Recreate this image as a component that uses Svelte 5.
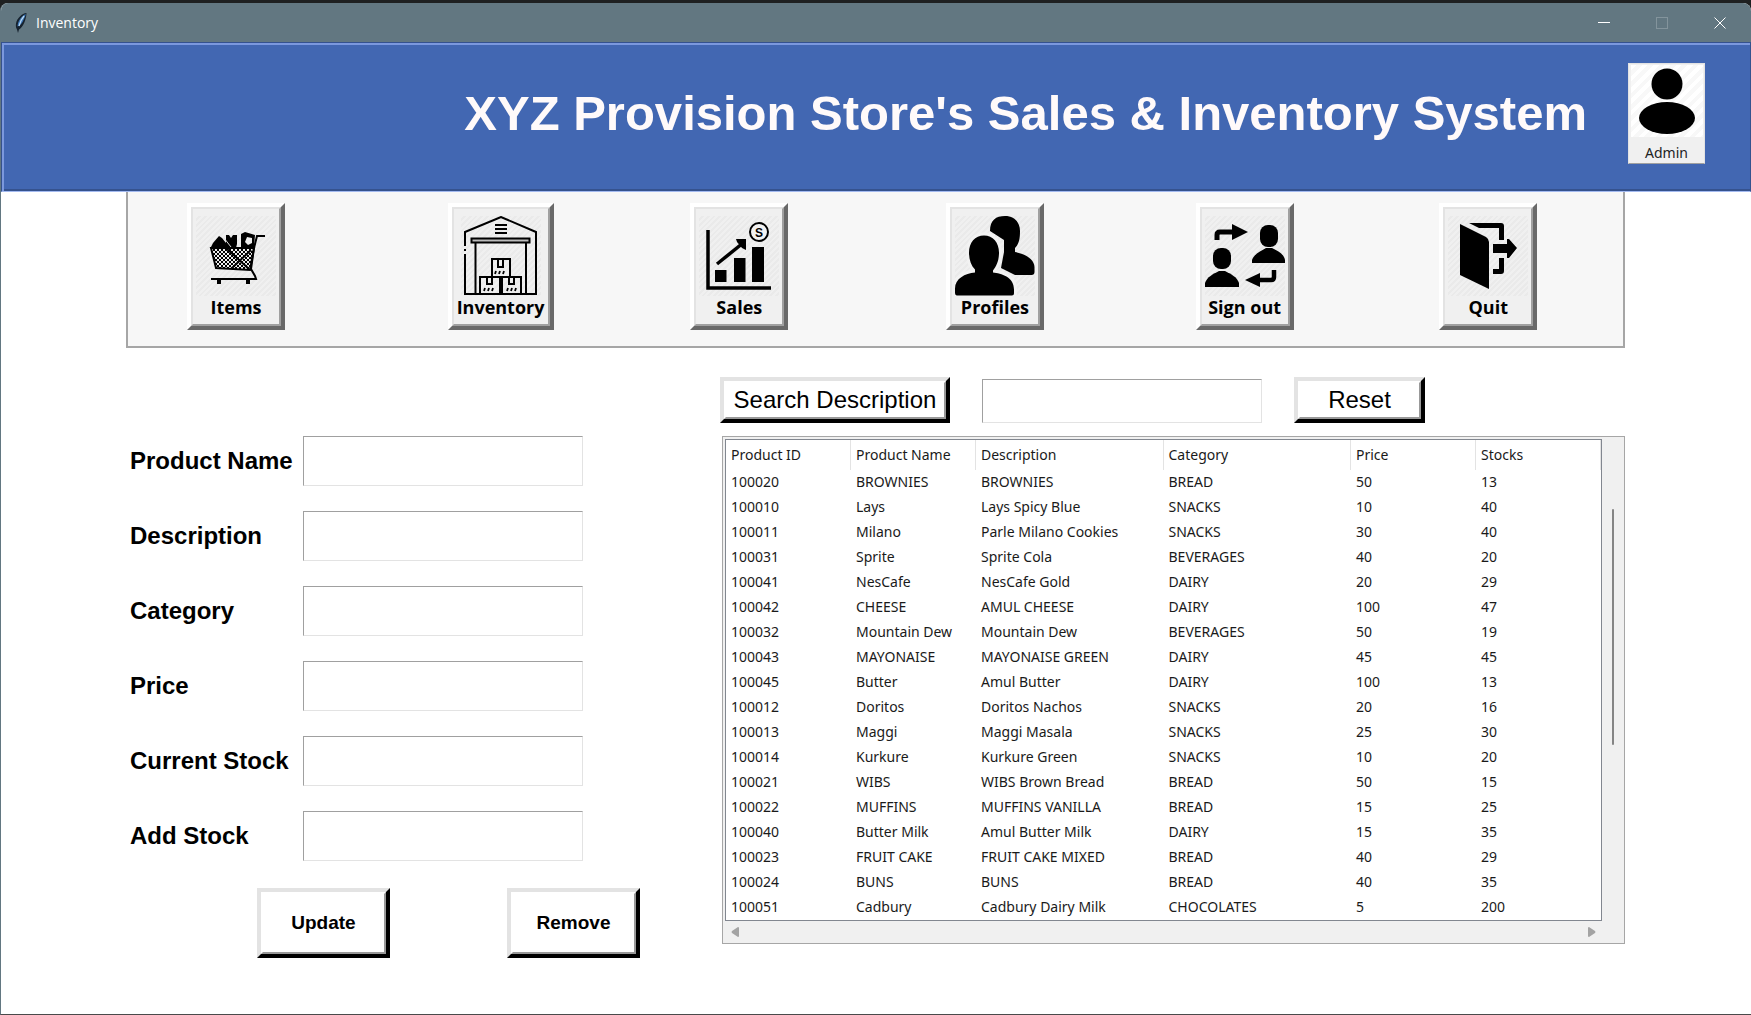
<script>
  const nav = [
    { id: 'items', label: 'Items' },
    { id: 'inventory', label: 'Inventory' },
    { id: 'sales', label: 'Sales' },
    { id: 'profiles', label: 'Profiles' },
    { id: 'signout', label: 'Sign out' },
    { id: 'quit', label: 'Quit' }
  ];
  const fields = ['Product Name', 'Description', 'Category', 'Price', 'Current Stock', 'Add Stock'];
  const headings = ['Product ID', 'Product Name', 'Description', 'Category', 'Price', 'Stocks'];
  const rows = [
    ['100020', 'BROWNIES', 'BROWNIES', 'BREAD', '50', '13'],
    ['100010', 'Lays', 'Lays Spicy Blue', 'SNACKS', '10', '40'],
    ['100011', 'Milano', 'Parle Milano Cookies', 'SNACKS', '30', '40'],
    ['100031', 'Sprite', 'Sprite Cola', 'BEVERAGES', '40', '20'],
    ['100041', 'NesCafe', 'NesCafe Gold', 'DAIRY', '20', '29'],
    ['100042', 'CHEESE', 'AMUL CHEESE', 'DAIRY', '100', '47'],
    ['100032', 'Mountain Dew', 'Mountain Dew', 'BEVERAGES', '50', '19'],
    ['100043', 'MAYONAISE', 'MAYONAISE GREEN', 'DAIRY', '45', '45'],
    ['100045', 'Butter', 'Amul Butter', 'DAIRY', '100', '13'],
    ['100012', 'Doritos', 'Doritos Nachos', 'SNACKS', '20', '16'],
    ['100013', 'Maggi', 'Maggi Masala', 'SNACKS', '25', '30'],
    ['100014', 'Kurkure', 'Kurkure Green', 'SNACKS', '10', '20'],
    ['100021', 'WIBS', 'WIBS Brown Bread', 'BREAD', '50', '15'],
    ['100022', 'MUFFINS', 'MUFFINS VANILLA', 'BREAD', '15', '25'],
    ['100040', 'Butter Milk', 'Amul Butter Milk', 'DAIRY', '15', '35'],
    ['100023', 'FRUIT CAKE', 'FRUIT CAKE MIXED', 'BREAD', '40', '29'],
    ['100024', 'BUNS', 'BUNS', 'BREAD', '40', '35'],
    ['100051', 'Cadbury', 'Cadbury Dairy Milk', 'CHOCOLATES', '5', '200']
  ];
</script>

<div class="desktop">
  <div class="window">
    <div class="titlebar">
      <svg class="feather" viewBox="0 0 14 22" aria-hidden="true">
        <path d="M12.500 1C8 1.500 3 6 2 11.500c-.4 2.500 0 4.500 1 6L4 21l1-3.500C9 15 12 9 12.500 1z" fill="#16222e" />
        <path d="M11.700 2C8 4 4 8 3.500 14.500c3-1 5-4 6-6.500 1-2 2-4 2.200-6z" fill="#3f78b8" />
        <path d="M10 4C7.500 7 6 10 5 14" stroke="#b9d8f2" stroke-width="1.200" fill="none" />
      </svg>
      <span class="window-name">Inventory</span>
      <div class="controls">
        <button aria-label="Minimize"><svg viewBox="0 0 12 12"><path d="M0 5.500h12" /></svg></button>
        <button aria-label="Maximize" disabled><svg viewBox="0 0 12 12"><rect x=".5" y=".5" width="11" height="11" /></svg></button>
        <button aria-label="Close"><svg viewBox="0 0 12 12"><path d="M.5.5l11 11M11.500.5l-11 11" /></svg></button>
      </div>
    </div>

    <header>
      <h1>XYZ Provision Store's Sales &amp; Inventory System</h1>
      <button class="admin">
        <svg viewBox="0 0 72 72" aria-hidden="true">
          <circle cx="36" cy="19" r="15.500" />
          <ellipse cx="36" cy="53" rx="28" ry="16" />
        </svg>
        <span>Admin</span>
      </button>
    </header>

    <div class="content">
      <nav>
        {#each nav as item}
          <div class="slot">
            <button class="tile">
              <span class="face">
                <svg viewBox="0 0 80 80" aria-hidden="true">
                  {#if item.id === 'items'}
                    <defs>
                      <pattern id="mesh" width="4" height="4" patternUnits="userSpaceOnUse">
                        <path d="M0 0l4 4M4 0L0 4" stroke="#000" stroke-width="1" />
                      </pattern>
                    </defs>
                    <path d="M15 32h43l-4 22-34-2z" fill="url(#mesh)" stroke="#000" stroke-width="2" />
                    <path d="M69 20h-8l-3 12-3 21 4 7 1 3H15" fill="none" stroke="#000" stroke-width="2" />
                    <path d="M31 33l22 20M55 34L36 52" stroke="#000" stroke-width="2" />
                    <path d="M15 31l2-4 6-7 3 2 4 5v-8l3 0 2 3 2-3h4v9l-1 4zM45 31V18l4-2 10 3-1 12z" />
                    <path d="M51 21l5 1 0 5-4 2-3-3z" fill="#eee" />
                    <path d="M28 22l7 9" stroke="#ddd" stroke-width="1" />
                    <path d="M21 63h4v5h-4zM50 63h4v5h-4z" />
                  {:else if item.id === 'inventory'}
                    <g fill="none" stroke="#000" stroke-width="2">
                      <path d="M4 30V16L40 1l35 15v62H4V38M4 33v2" />
                      <path d="M34 9h12M34 13h12M34 17h12" />
                      <path d="M10.500 22.500h58v4h-58z" fill="#bbb" />
                      <path d="M14.500 27v51M65 27v51" />
                      <path d="M31 43h18v18H31zM19 61h20v17H19zM41 61h19v17H41z" />
                      <path d="M37 43v8h5v-8M26 61v7h5v-7M48 61v7h5v-7" />
                      <path d="M34 58l1-3M38 58l1-3M42 58l1-3M23 75l1-3M27 75l1-3M31 75l1-3M46 75l1-3M50 75l1-3M54 75l1-3" stroke-width="1.800" />
                    </g>
                  {:else if item.id === 'sales'}
                    <path d="M9 14v58h63" fill="none" stroke="#000" stroke-width="3.500" />
                    <path d="M16 54h11.500v12H16zM35 42h11.500v24H35zM53 31h12v35H53z" />
                    <path d="M18 48l26-21" stroke="#000" stroke-width="3.500" />
                    <path d="M37 23h10v11l-4-2-5-6z" />
                    <circle cx="60" cy="16" r="9" fill="#f2f2f2" stroke="#000" stroke-width="2" />
                    <text x="60" y="20.500" text-anchor="middle">S</text>
                  {:else if item.id === 'profiles'}
                    <path d="M35 15C35 4 41 0 50 0s15 6 15 15c0 8-1 13-5 17v4c10 2 20 7 19.500 16v4q0 3-3 3H60L46 52l3-16V24z" />
                    <path d="M29 19.500c9 0 15 7 15 17 0 9-3 14-6 18v2c8 1 21 4 21 17v4q0 2-2 2H2q-2 0-2-3v-4c0-10 10-15 20-16v-3c-4-4-6-10-6-17 0-10 6-17 15-17z" stroke="#f2f2f2" stroke-width="6" paint-order="stroke" />
                  {:else if item.id === 'signout'}
                    <path d="M12 24v-5q0-3 3-3h14" fill="none" stroke="#000" stroke-width="5" />
                    <path d="M27 8l16 8-16 8z" />
                    <path d="M69 54v7q0 3-3 3H54" fill="none" stroke="#000" stroke-width="4.500" />
                    <path d="M55 57l-15 7 15 7z" />
                    <rect x="55" y="9" width="18" height="22" rx="8" />
                    <path d="M47 47v-3c2-6 9-9 14-12h6c6 3 12 6 13 12v3z" />
                    <rect x="8" y="32" width="18" height="21" rx="8" />
                    <path d="M0 71v-4c2-6 8-9 14-12h6c6 3 12 6 14 12v4z" />
                  {:else}
                    <path d="M12 8l26 13q3 2 3 5v47L12 59z" />
                    <path d="M21 7h32q3 0 3 3v14h-5V12H31z" />
                    <path d="M45 53h6V42h5v13q0 3-3 3h-8zM45 28h14v-5h2l8 9-8 10h-2v-5H45z" />
                  {/if}
                </svg>
                <span class="caption">{item.label}</span>
              </span>
            </button>
          </div>
        {/each}
      </nav>

      <main>
        <form onsubmit={(e) => e.preventDefault()}>
          {#each fields as field, i}
            <div class="field">
              <label for="field-{i}">{field}</label>
              <input id="field-{i}" type="text" />
            </div>
          {/each}
          <div class="actions">
            <button class="raised" type="button"><span>Update</span></button>
            <button class="raised" type="button"><span>Remove</span></button>
          </div>
        </form>

        <section>
          <div class="search">
            <button class="raised find"><span>Search Description</span></button>
            <input type="text" aria-label="Search Description" />
            <button class="raised reset"><span>Reset</span></button>
          </div>
          <div class="panel">
            <div class="tree">
              <table>
                <thead>
                  <tr>
                    {#each headings as heading, i}
                      <th class:wide={i === 2 || i === 3}>{heading}</th>
                    {/each}
                  </tr>
                </thead>
                <tbody>
                  {#each rows as row}
                    <tr>
                      {#each row as cell}<td>{cell}</td>{/each}
                    </tr>
                  {/each}
                </tbody>
              </table>
            </div>
            <div class="vbar"><span></span></div>
            <div class="hbar">
              <svg viewBox="0 0 8 10" aria-hidden="true"><path d="M7 0L1 4q-1 1 0 2l6 4q1 0 1-1V1q0-1-1-1z" /></svg>
              <svg viewBox="0 0 8 10" aria-hidden="true"><path d="M1 0l6 4q1 1 0 2l-6 4q-1 0-1-1V1q0-1 1-1z" /></svg>
            </div>
          </div>
        </section>
      </main>
    </div>
  </div>
</div>

<style>
  :global(body) {
    margin: 0;
    background: #1e2021;
  }
  .desktop,
  .desktop * {
    box-sizing: border-box;
  }
  .desktop {
    min-height: 100vh;
    padding-top: 3px;
    display: flex;
    flex-direction: column;
    font-family: 'Liberation Sans', Arial, sans-serif;
    color: #000;
  }
  button {
    font: inherit;
    color: inherit;
    padding: 0;
    border: 0;
    background: none;
  }
  .window {
    flex: 1;
    display: flex;
    flex-direction: column;
    border-left: 1px solid #627781;
    border-bottom: 1px solid #4a4a4a;
    border-radius: 8px 8px 0 0;
    overflow: hidden;
    background: #fff;
  }
  .titlebar {
    height: 39px;
    display: flex;
    align-items: center;
    padding: 0 2px 0 13px;
    background: #627781;
    color: #fff;
    font: 14px 'Open Sans', 'Noto Sans', sans-serif;
  }
  .feather {
    width: 14px;
    height: 22px;
    margin-right: 8px;
  }
  .controls {
    margin-left: auto;
    display: flex;
  }
  .controls button {
    width: 58px;
    height: 39px;
    display: grid;
    place-items: center;
  }
  .controls svg {
    width: 12px;
    height: 12px;
    fill: none;
    stroke: #fff;
  }
  .controls button:disabled svg {
    stroke: #83949c;
  }
  header {
    height: 150px;
    display: flex;
    align-items: center;
    justify-content: flex-end;
    gap: 41px;
    padding: 0 45px 8px 0;
    background: #4267b2;
    border: 1px solid #35528e;
    border-bottom: 1px solid #a3baf0;
    box-shadow: inset 2px 2px #7b98dd, inset 0 -2px #35528e;
  }
  h1 {
    margin: 0;
    font-size: 49px;
    line-height: 56px;
    color: #fffafa;
  }
  .admin {
    width: 77px;
    height: 101px;
    display: flex;
    flex-direction: column;
    align-items: center;
    padding-top: 1px;
    background: #f0f0f0;
    border: 1px solid #e3e3e3;
    border-bottom-color: #a0a0a0;
    color: #222;
    font: 14px/32px 'Noto Sans', sans-serif;
  }
  .admin svg {
    flex: none;
    width: 72px;
    height: 72px;
    background: repeating-linear-gradient(135deg, #fff 0 4px, #f8f8f8 4px 8px);
  }
  .admin span {
    height: 24px;
  }
  .content {
    padding: 0 126px 0 125px;
  }
  nav {
    height: 156px;
    display: grid;
    grid-template-columns: 261fr 243fr 256fr 250fr 244fr 184fr;
    padding: 11px 0 0 59px;
    background: #f7f7f7;
    border: 2px solid #a6a6a6;
    border-top: 0;
  }
  .tile {
    min-width: 98px;
    border: 4px solid;
    border-color: #fff #696969 #696969 #fff;
    background: #f0f0f0;
  }
  .face {
    height: 119px;
    display: flex;
    flex-direction: column;
    align-items: center;
    padding: 7px 3px 0;
    border: 2px solid;
    border-color: #e3e3e3 #a0a0a0 #a0a0a0 #e3e3e3;
  }
  .face svg {
    width: 80px;
    height: 80px;
    background: repeating-linear-gradient(135deg, #f0f0f0 0 2px, #eaeaea 2px 4px);
  }
  .face text {
    font: bold 12px 'Liberation Sans', sans-serif;
  }
  .caption {
    font: bold 18px/22px 'Open Sans', sans-serif;
    white-space: nowrap;
  }
  main {
    display: grid;
    grid-template-columns: 594fr 905fr;
    padding-top: 29px;
  }
  form {
    display: flex;
    flex-direction: column;
    gap: 25px;
    padding: 59px 0 0 4px;
  }
  .field {
    display: grid;
    grid-template-columns: 173px 280px;
    align-items: center;
  }
  label {
    font-weight: bold;
    font-size: 24px;
    line-height: 28px;
    white-space: nowrap;
  }
  input {
    width: 280px;
    height: 50px;
    padding: 0 8px;
    border: 1px solid;
    border-color: #a0a0a0 #e3e3e3 #e3e3e3 #a0a0a0;
    background: #fff;
    font: 22px 'Liberation Sans', sans-serif;
  }
  .raised {
    border: 4px solid;
    border-color: #e3e3e3 #000 #000 #e3e3e3;
    background: #fff;
  }
  .raised span {
    height: 100%;
    display: grid;
    place-items: center;
    border: 2px solid;
    border-color: #fff #999 #999 #fff;
  }
  .actions {
    display: flex;
    gap: 117px;
    padding-left: 127px;
    margin-top: 2px;
  }
  .actions .raised {
    width: 133px;
    height: 70px;
    font-weight: bold;
    font-size: 19px;
  }
  .search {
    display: flex;
    align-items: flex-end;
    gap: 32px;
  }
  .search .raised {
    height: 46px;
    font-size: 24px;
    white-space: nowrap;
  }
  .search input {
    height: 44px;
  }
  .find {
    width: 230px;
  }
  .reset {
    width: 131px;
  }
  .panel {
    margin: 13px 0 0 2px;
    display: grid;
    grid-template-columns: 1fr 22px;
    padding: 2px 0 0 2px;
    border: 1px solid #a6a6a6;
    background: #f0f0f0;
  }
  .tree {
    border: 1px solid #828790;
    background: #fff;
  }
  table {
    width: 100%;
    table-layout: fixed;
    border-spacing: 0;
    color: #1a1a1a;
    font: 14px/24px 'Noto Sans', sans-serif;
  }
  th,
  td {
    height: 25px;
    padding: 0 0 0 5px;
    text-align: left;
    white-space: nowrap;
    font-weight: normal;
  }
  th {
    width: calc(100% / 7);
    height: 30px;
    border-right: 1px solid #e3e3e3;
  }
  th.wide {
    width: calc(150% / 7);
  }
  td {
    padding-bottom: 1px;
  }
  .vbar {
    display: flex;
    justify-content: center;
    padding-top: 70px;
  }
  .vbar span {
    width: 2px;
    height: 236px;
    border-radius: 1px;
    background: #858585;
  }
  .hbar {
    height: 22px;
    display: flex;
    align-items: center;
    justify-content: space-between;
    padding: 0 6px;
  }
  .hbar svg {
    width: 8px;
    height: 10px;
    fill: #a3a3a3;
  }
</style>
